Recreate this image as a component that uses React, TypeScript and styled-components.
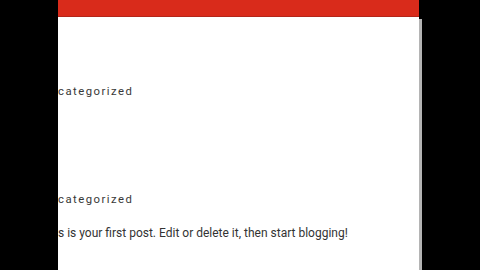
import React from 'react'
import styled, { createGlobalStyle } from 'styled-components'

const GlobalStyle = createGlobalStyle`
  html, body {
    margin: 0;
    padding: 0;
    background: #000;
  }
  body {
    font-family: Roboto, "Liberation Sans", Arial, sans-serif;
  }
`

const Frame = styled.div`
  display: flex;
  width: 480px;
  height: 270px;
  background: #000;
  overflow: hidden;
`

const SideBar = styled.div<{ width: number }>`
  flex: 0 0 ${(p) => p.width}px;
  background: #000;
`

const Page = styled.div`
  flex: 0 0 361px;
  display: flex;
  flex-direction: column;
  background: #fff;
  overflow: hidden;
`

const Header = styled.div`
  height: 16px;
  flex: 0 0 16px;
  background: #d92b1b;
  border-bottom: 1px solid #b3261a;
`

const Content = styled.div`
  display: flex;
  flex-direction: column;
  padding-top: 67px;
`

const Category = styled.div`
  font-size: 11.3px;
  line-height: 16px;
  letter-spacing: 1.5px;
  color: #383838;
`

const Post = styled.div`
  margin-top: 92px;
  display: flex;
  flex-direction: column;
  gap: 16px;
`

const Excerpt = styled.p`
  margin: 0;
  font-size: 12px;
  line-height: 18px;
  color: #333;
`

const Scroll = styled.div`
  flex: 0 0 3px;
  background: linear-gradient(to bottom, #000 0 19px, #b4b4b4 19px);
`

export default function App() {
  return (
    <>
      <GlobalStyle />
      <Frame>
        <SideBar width={58} />
        <Page>
          <Header />
          <Content>
            <Category>categorized</Category>
            <Post>
              <Category>categorized</Category>
              <Excerpt>s is your first post. Edit or delete it, then start blogging!</Excerpt>
            </Post>
          </Content>
        </Page>
        <Scroll />
        <SideBar width={58} />
      </Frame>
    </>
  )
}
